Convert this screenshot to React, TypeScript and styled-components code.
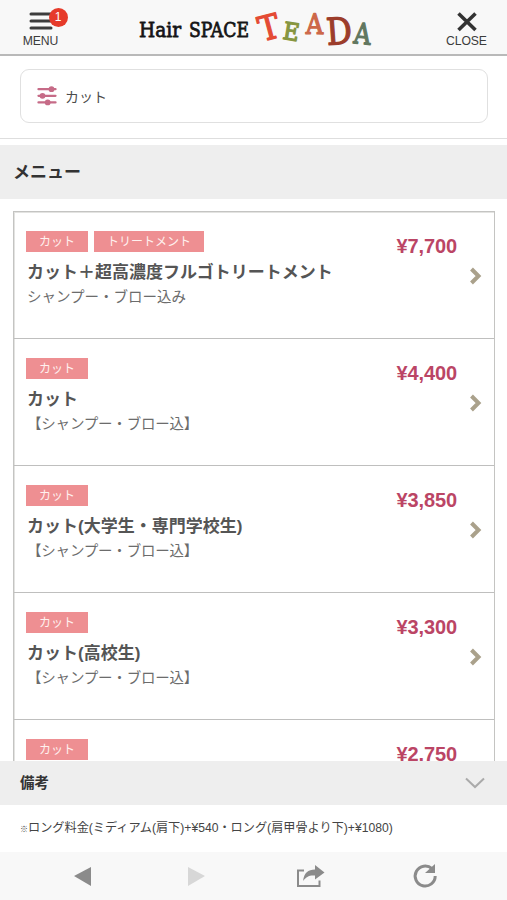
import React from "react";
import styled, { createGlobalStyle } from "styled-components";

const GlobalStyle = createGlobalStyle`
  * { box-sizing: border-box; }
  body {
    margin: 0;
    background: #fff;
    font-family: "Liberation Sans", "Noto Sans CJK JP", sans-serif;
    color: #444;
    text-spacing-trim: space-all;
  }
`;

const Screen = styled.div`
  display: flex;
  flex-direction: column;
  height: 900px;
  width: 507px;
  overflow: hidden;
`;

const Header = styled.header`
  display: flex;
  flex: none;
  justify-content: space-between;
  height: 56px;
  background: #f8f8f8;
  border-bottom: 2px solid #b9b9b9;
`;

const HeaderButton = styled.button`
  display: flex;
  flex-direction: column;
  align-items: center;
  width: 81px;
  padding: 10px 0 0;
  border: 0;
  background: none;
  color: #3c3c3c;
  font: 12.2px/14px "Liberation Sans", sans-serif;
  letter-spacing: -0.1px;
`;

const IconBox = styled.span`
  position: relative;
  display: block;
  height: 24px;
  svg { display: block; }
`;

const Badge = styled.span`
  position: absolute;
  left: 20px;
  top: -2px;
  width: 19px;
  height: 19px;
  border-radius: 50%;
  background: #e63a2a;
  color: #fff;
  font-size: 12px;
  line-height: 19px;
  text-align: center;
`;

const SearchArea = styled.div`
  flex: none;
  height: 83px;
  padding: 13px 19px 0 20px;
  border-bottom: 1px solid #dedede;
`;

const SearchField = styled.div`
  display: flex;
  align-items: center;
  gap: 8px;
  height: 54px;
  padding: 0 16px;
  border: 1px solid #e0e0e0;
  border-radius: 9px;
  color: #4c4c4c;
  font-size: 14px;
`;

const SectionTitle = styled.h1`
  flex: none;
  height: 54px;
  margin: 6px 0 0;
  padding-left: 13px;
  background: #eee;
  color: #333;
  font-size: 17px;
  line-height: 55px;
  font-weight: 700;
`;

const ListArea = styled.main`
  flex: 1;
  min-height: 0;
  overflow: hidden;
  padding: 12px 12px 0 13px;
`;

const MenuList = styled.ul`
  margin: 0;
  padding: 0;
  list-style: none;
  border: 1px solid #c4c4c2;
  border-width: 1px 1px 0;
  box-shadow: inset 1px 0 #e3e3e1, inset 0 1px #e3e3e1;
`;

const MenuItem = styled.li`
  display: grid;
  grid-template-columns: 1fr auto 13px;
  column-gap: 12px;
  height: 127px;
  padding: 19px 12px 0 12px;
  border-bottom: 1px solid #bfbfbe;
`;

const Tags = styled.div`
  display: flex;
  gap: 6px;
`;

const Tag = styled.span<{ $wide?: boolean }>`
  width: ${(p) => (p.$wide ? 110 : 62)}px;
  height: 21px;
  background: #ee8f92;
  color: #fff1ef;
  font-size: 12px;
  line-height: 22px;
  text-align: center;
`;

const ItemName = styled.h2`
  margin: 8px 0 0;
  padding-left: 1px;
  color: #555;
  font-size: 17px;
  line-height: 26px;
  font-weight: 700;
  white-space: nowrap;
`;

const ItemNote = styled.p`
  margin: 0;
  padding-left: 1px;
  color: #6c6c6c;
  font-size: 14.5px;
  line-height: 22px;
  white-space: nowrap;

  &[data-bracketed="true"] {
    letter-spacing: -0.2px;
  }
`;

const Price = styled.div`
  padding-top: 4px;
  color: #bb4565;
  font-size: 20px;
  letter-spacing: -0.1px;
  line-height: 23px;
  font-weight: 700;
`;

const Arrow = styled.svg`
  width: 13px;
  height: 18px;
  margin-top: 36px;
`;

const NotesHeader = styled.div`
  display: flex;
  flex: none;
  align-items: center;
  justify-content: space-between;
  height: 44px;
  padding: 0 22px 3px 20px;
  background: #eee;
  color: #333;
  font-size: 14.5px;
  font-weight: 700;

  svg { margin-top: 3px; }
`;

const Notes = styled.p`
  flex: none;
  height: 47px;
  margin: 0;
  padding-left: 20px;
  color: #444;
  font-size: 12.17px;
  line-height: 47px;
  white-space: nowrap;
`;

const ReferenceMark = styled.span`
  display: inline-block;
  width: 8px;
  font-size: 8px;
  font-weight: 700;
`;

const BrowserBar = styled.nav`
  display: grid;
  flex: none;
  grid-template-columns: 139px 114px 114px 1fr;
  align-items: center;
  height: 48px;
  background: #f8f8f8;
  svg { display: block; }
`;

const NavSlot = styled.span<{ $left: number }>`
  padding-left: ${(p) => p.$left}px;
`;

const Logo = () => (
  <svg width="240" height="54" viewBox="0 0 240 54" role="img" aria-label="Hair SPACE TEADA">
    <g fill="#151515" stroke="#151515" strokeWidth="0.8" strokeLinejoin="round" fontFamily="DejaVu Serif" fontSize="20">
      <text x="5" y="37" textLength="42" lengthAdjust="spacingAndGlyphs">Hair</text>
      <text x="55" y="37" textLength="60" lengthAdjust="spacingAndGlyphs">SPACE</text>
    </g>
    <g fontFamily="DejaVu Serif" textAnchor="middle" strokeWidth="1.3" strokeLinejoin="round">
      <text transform="translate(138 39) rotate(-15) scale(.92 1)" fontSize="34" fill="#e44b34" stroke="#e44b34">T</text>
      <text transform="translate(156 40) rotate(9) scale(.92 1)" fontSize="24" fill="#879640" stroke="#879640">E</text>
      <text transform="translate(180.5 34) rotate(1) scale(.86 1)" fontSize="28" fill="#cd6849" stroke="#cd6849">A</text>
      <text transform="translate(206 44) rotate(-4) scale(.86 1)" fontSize="37" fill="#9c3d2b" stroke="#9c3d2b">D</text>
      <text transform="translate(227.5 44) rotate(6) scale(.82 1)" fontSize="29" fill="#617760" stroke="#617760">A</text>
    </g>
  </svg>
);

const items = [
  { tags: ["カット", "トリートメント"], name: "カット＋超高濃度フルゴトリートメント", note: "シャンプー・ブロー込み", price: "¥7,700" },
  { tags: ["カット"], name: "カット", note: "【シャンプー・ブロー込】", price: "¥4,400" },
  { tags: ["カット"], name: "カット(大学生・専門学校生)", note: "【シャンプー・ブロー込】", price: "¥3,850" },
  { tags: ["カット"], name: "カット(高校生)", note: "【シャンプー・ブロー込】", price: "¥3,300" },
  { tags: ["カット"], name: "", note: "", price: "¥2,750" },
];

export default function App() {
  return (
    <Screen>
      <GlobalStyle />
      <Header>
        <HeaderButton>
          <IconBox>
            <svg width="24" height="24" stroke="#3c3c3c" strokeWidth="3" strokeLinecap="round">
              <path d="M2 4H22M2 11H22M2 18H22" />
            </svg>
            <Badge>1</Badge>
          </IconBox>
          MENU
        </HeaderButton>
        <Logo />
        <HeaderButton>
          <IconBox>
            <svg width="22" height="24" stroke="#333" strokeWidth="3.6">
              <path d="M2.5 3.5L19.5 20M19.5 3.5L2.5 20" />
            </svg>
          </IconBox>
          CLOSE
        </HeaderButton>
      </Header>
      <SearchArea>
        <SearchField>
          <svg width="20" height="20" viewBox="0 0 20 20" fill="#c66b87">
            <path d="M1.5 3.2H18.5M1.5 9.8H18.5M1.5 16.4H18.5" stroke="#c66b87" strokeWidth="2.3" strokeLinecap="round" />
            <circle cx="14.5" cy="3.2" r="2.9" />
            <circle cx="5.5" cy="9.8" r="2.9" />
            <circle cx="10.7" cy="16.4" r="2.9" />
          </svg>
          カット
        </SearchField>
      </SearchArea>
      <SectionTitle>メニュー</SectionTitle>
      <ListArea>
        <MenuList>
          {items.map((item) => (
            <MenuItem key={item.price}>
              <div>
                <Tags>
                  {item.tags.map((tag) => (
                    <Tag key={tag} $wide={tag.length > 3}>{tag}</Tag>
                  ))}
                </Tags>
                <ItemName>{item.name}</ItemName>
                <ItemNote data-bracketed={item.note.startsWith("【")}>{item.note}</ItemNote>
              </div>
              <Price>{item.price}</Price>
              <Arrow viewBox="0 0 13 18" fill="none" stroke="#aaa18b" strokeWidth="4">
                <path d="M2.5 2L9.5 9L2.5 16" />
              </Arrow>
            </MenuItem>
          ))}
        </MenuList>
      </ListArea>
      <NotesHeader>
        備考
        <svg width="20" height="12" fill="none" stroke="#aaa" strokeWidth="2">
          <path d="M1 1.5L10 10L19 1.5" />
        </svg>
      </NotesHeader>
      <Notes>
        <ReferenceMark>※</ReferenceMark>
        ロング料金(ミディアム(肩下)+¥540・ロング(肩甲骨より下)+¥1080)
      </Notes>
      <BrowserBar>
        <NavSlot $left={74}>
          <svg width="17" height="20"><path d="M0 10L17 1V20Z" fill="#8b8b8b" /></svg>
        </NavSlot>
        <NavSlot $left={49}>
          <svg width="17" height="20"><path d="M17 10L0 1V20Z" fill="#d7d7d7" /></svg>
        </NavSlot>
        <NavSlot $left={43}>
          <svg width="30" height="24">
            <path d="M8 6.5H2V22H23.5V16.5" fill="none" stroke="#8b8b8b" strokeWidth="2" />
            <path d="M19 1L28.5 8.5L19 15.5V11.5C13 11 10 13 7 17C8 9 12 5.5 19 5.5Z" fill="#8b8b8b" />
          </svg>
        </NavSlot>
        <NavSlot $left={45}>
          <svg width="26" height="26">
            <path d="M20 5.7A10 10 0 1 0 23.2 13" fill="none" stroke="#8b8b8b" strokeWidth="3" />
            <path d="M23 1V10H13Z" fill="#8b8b8b" />
          </svg>
        </NavSlot>
      </BrowserBar>
    </Screen>
  );
}
